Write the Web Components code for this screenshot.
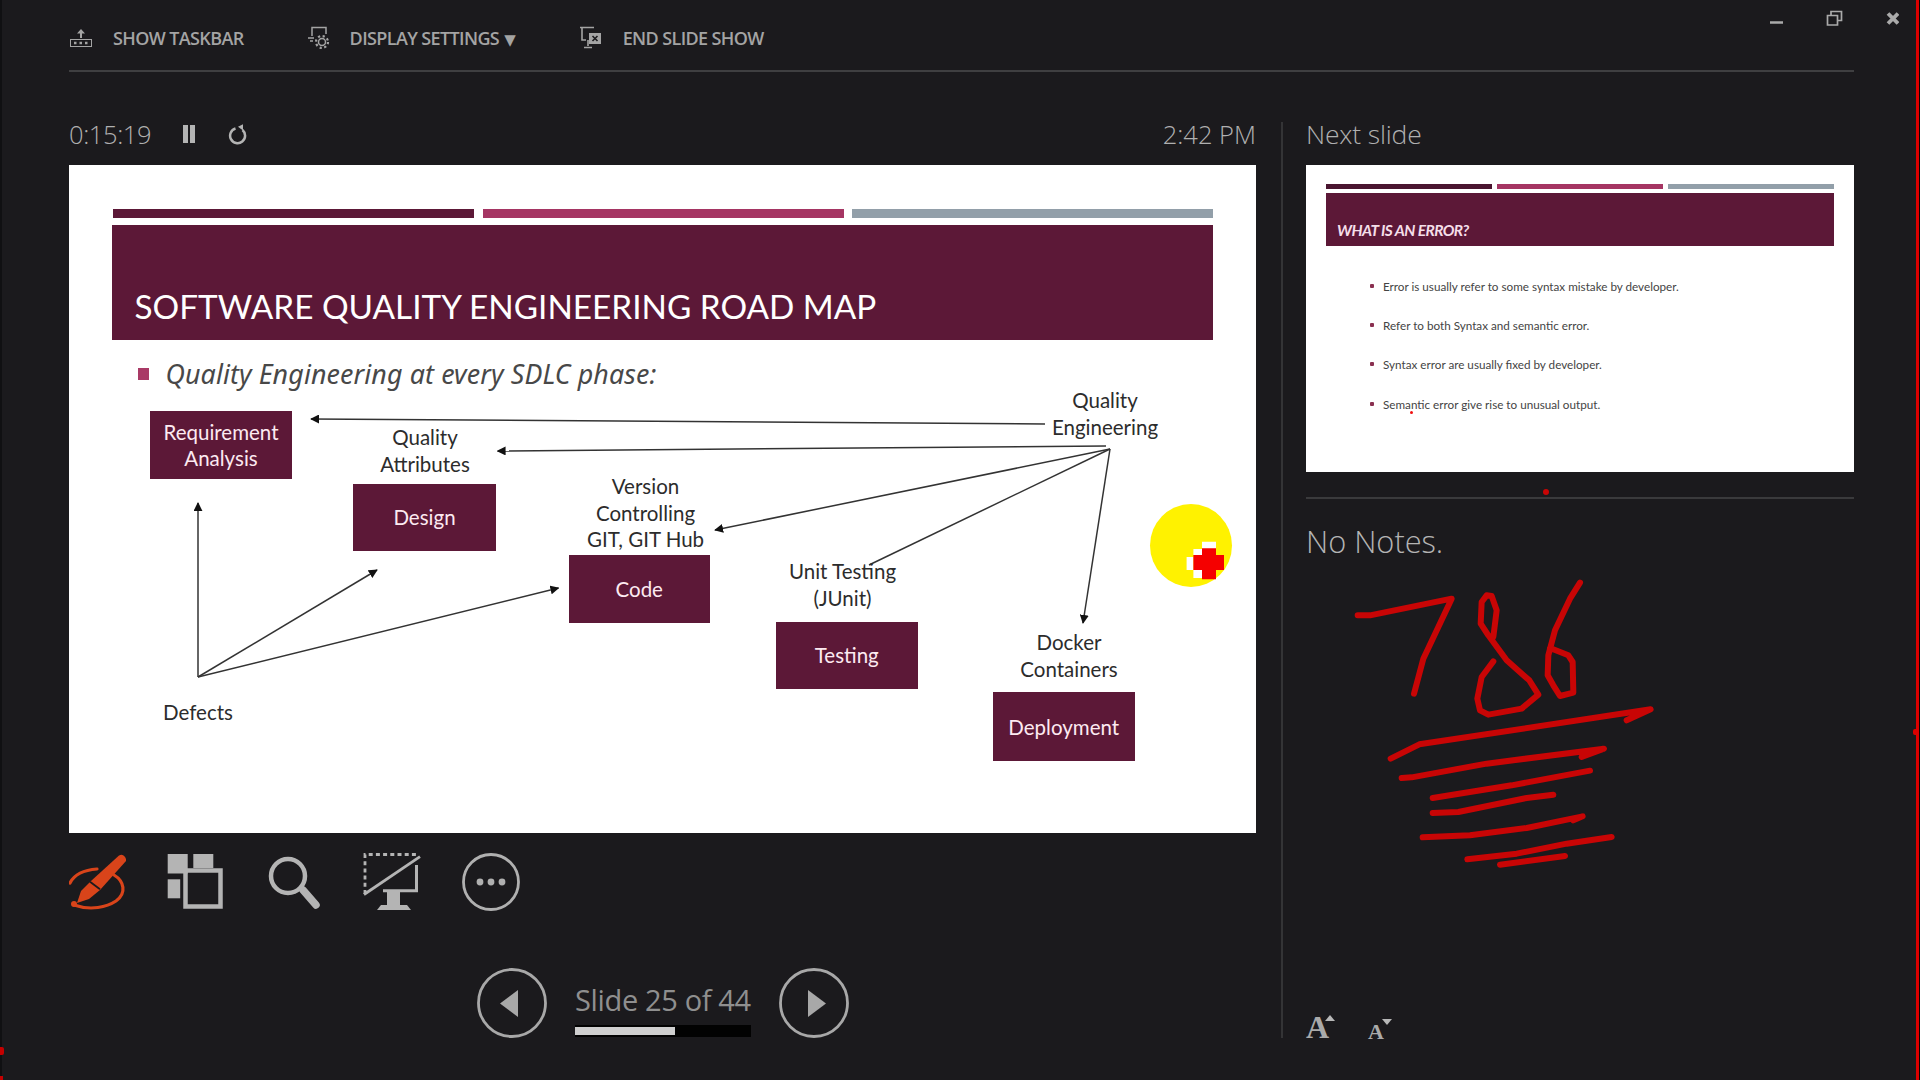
<!DOCTYPE html>
<html><head><meta charset="utf-8"><style>
html,body{margin:0;padding:0;background:#1b1a1d;}
</style></head><body>
<pp-presenter></pp-presenter>
<template id="t-presenter"><style>
:host{display:block;width:1920px;height:1080px;overflow:hidden;position:relative;background:#1b1a1d;color:#a9a9a9;font-family:"Open Sans","Liberation Sans",sans-serif;}
.edgeL{position:absolute;left:0;top:0;bottom:0;width:2px;background:#101012}
.edgeR{position:absolute;right:0;top:0;bottom:0;width:4px;background:linear-gradient(90deg,#dc0000 0 3px,#050505 3px)}
.blobR{position:absolute;left:1913px;top:729px;width:6px;height:6px;border-radius:2px;background:#dc0000}
.blobA{position:absolute;left:0;top:1047px;width:4px;height:8px;border-radius:0 2px 2px 0;background:#c40000}
.blobB{position:absolute;left:0;top:1076px;width:3px;height:4px;background:#c40000}
.body{display:flex;height:1008px;padding:0 66px 0 69px}
.rule{height:2px;background:#3f3f41;margin:0 66px 0 69px}
.left{width:1187px;display:flex;flex-direction:column}
.vr{width:2px;background:#343436;margin:50px 23px 42px 25px;flex:none}
.right{flex:1;min-width:0;display:flex;flex-direction:column}
</style>
<pp-titlebar></pp-titlebar><div class="rule"></div>
<div class="body">
 <div class="left"><pp-timerbar></pp-timerbar><pp-main-slide></pp-main-slide><pp-tools></pp-tools><pp-nav></pp-nav></div>
 <div class="vr"></div>
 <div class="right"><pp-next></pp-next><pp-notes></pp-notes></div>
</div>
<div class="edgeL"></div><div class="edgeR"></div><div class="blobR"></div><div class="blobA"></div><div class="blobB"></div>
</template>

<template id="t-titlebar"><style>
:host{display:flex;height:70px;padding:0 21px 0 69px;box-sizing:border-box;position:relative}
.i{display:flex;align-items:center;height:76px;font:600 18px "Open Sans",sans-serif;letter-spacing:-.62px;color:#a4a4a4;white-space:nowrap}
.i svg{display:block;margin-right:20px;flex:none}
.i+.i{margin-left:63px}
.tri{font:15px "DejaVu Sans",sans-serif;margin-left:5px;letter-spacing:0}
.win{margin-left:auto;display:flex;align-items:flex-start;color:#aaa}
.win svg{display:block}
</style>
<div class="i"><svg width="24" height="24" viewBox="0 0 24 24" fill="none" stroke="#a4a4a4"><path d="M12 3l4 4.5h-3V12h-2V7.5H8z" fill="#a4a4a4" stroke="none"/><rect x="1.5" y="13.5" width="21" height="7"/><path d="M5 17h2.500M10.500 17H13M16 17h2.500" stroke-width="2.400"/></svg>SHOW TASKBAR</div>
<div class="i"><svg width="24" height="26" viewBox="0 0 24 26" fill="none" stroke="#a4a4a4" stroke-width="1.5" style="margin-right:19px"><path d="M5 11V2.500h14V9M1 13h6M3 16h3"/><circle cx="15" cy="17" r="3.500"/><circle cx="15" cy="17" r="6" stroke-dasharray="2.200 2.500" stroke-width="2.200"/></svg><span>DISPLAY SETTINGS<span class="tri">▼</span></span></div>
<div class="i"><svg width="24" height="26" viewBox="0 0 24 26" fill="none" stroke="#a4a4a4" stroke-width="1.600"><path d="M1 2.500h14M3 3v12h4M9 15v6M5 22.500h8"/><rect x="10" y="8" width="12" height="11" fill="#a4a4a4" stroke="none"/><path d="M13.500 11l5 5M18.500 11l-5 5" stroke="#1b1a1d"/></svg>END SLIDE SHOW</div>
<div class="win">
<svg width="130" height="34" viewBox="0 0 130 34" fill="none" stroke="#aaa"><path d="M1 22.500h13" stroke-width="2.500"/><path d="M58.500 15.500h10v9.500h-10zM62 15v-3.500h10.500v9H69" stroke-width="1.700"/><path d="M119 13.500l10 10M129 13.500l-10 10" stroke-width="3.800"/></svg>
</div>
</template>

<template id="t-timerbar"><style>
:host{display:flex;align-items:center;height:93px;padding-top:30px;box-sizing:border-box;font:300 25.500px "Open Sans",sans-serif;color:#b0b0b0;flex:none}
svg{display:block}
.t{letter-spacing:-.4px;width:114px}
.r{margin-left:auto;font-weight:300;letter-spacing:0}
</style>
<span class="t">0:15:19</span>
<svg width="13" height="20" viewBox="0 0 13 20" fill="#b4b4b4"><rect x="0" y="1" width="5" height="18"/><rect x="7" y="1" width="5" height="18"/></svg>
<svg style="margin-left:32px" width="20" height="22" viewBox="0 0 20 22" fill="none" stroke="#b4b4b4" stroke-width="2.500"><path d="M7.500 5.500a7.500 7.500 0 1 0 7 1.500"/><path d="M6 1.500l5 3.800-5 2.500z" fill="#b4b4b4" stroke="none" transform="translate(5 -1) rotate(180 8 5)"/></svg>
<span class="r">2:42 PM</span>
</template>

<template id="t-main"><style>
:host{display:block;position:relative;width:1187px;height:668px;background:#fff;font-family:Lato,"Liberation Sans",sans-serif;color:#2d2d2d;overflow:hidden;flex:none}
.bars{display:flex;gap:8.500px;margin:44px 43px 0 44px;height:9px}
.bars i{flex:1;display:block}
.hd{margin:7px 43px 0 42.500px;height:115px;background:#5c1837;box-sizing:border-box;display:flex;align-items:flex-end;padding:0 0 14px 23px;color:#fff;font-size:33.300px;white-space:nowrap;letter-spacing:0}
.sub{display:flex;align-items:center;margin:16px 0 0 68.500px;font-style:italic;font-size:26.800px;color:#484848;font-family:"Noto Sans","Open Sans",sans-serif;letter-spacing:.12px;line-height:36px}
.sub b{width:11px;height:12px;background:#a93a66;margin-right:17px;display:block}
svg.lines{position:absolute;left:0;top:0}
.box{position:absolute;background:#5c1837;color:#fdeaf1;display:flex;align-items:center;justify-content:center;text-align:center;font-size:20.500px;line-height:26.500px;box-sizing:border-box}
.lb{position:absolute;text-align:center;font-size:20.500px;line-height:26.500px;white-space:nowrap;transform:translateX(-50%);color:#2c2c2c}
</style>
<div class="bars"><i style="background:#5c1837"></i><i style="background:#a53563"></i><i style="background:#929fa9"></i></div>
<div class="hd">SOFTWARE QUALITY ENGINEERING ROAD MAP</div>
<div class="sub"><b></b>Quality Engineering at every SDLC phase:</div>
<svg class="lines" width="1187" height="668" viewBox="69 165 1187 668" fill="none" stroke="#333" stroke-width="1.500">
<defs><marker id="a" viewBox="0 0 10 10" refX="9" refY="5" markerWidth="9" markerHeight="9" markerUnits="userSpaceOnUse" orient="auto"><path d="M0 0L10 5L0 10z" fill="#111" stroke="none"/></marker></defs>
<path d="M1045 424L311 419" marker-end="url(#a)"/>
<path d="M1106 446L497.500 451" marker-end="url(#a)"/>
<path d="M1110 449L715 530" marker-end="url(#a)"/>
<path d="M1110 449L869 565"/>
<path d="M1110 449L1083 623" marker-end="url(#a)"/>
<path d="M198 677V503" marker-end="url(#a)"/>
<path d="M198 677L377 570" marker-end="url(#a)"/>
<path d="M198 677L558.500 588" marker-end="url(#a)"/>
</svg>
<div class="box" style="left:81px;top:246px;width:142px;height:68px">Requirement<br>Analysis</div>
<div class="box" style="left:284px;top:319px;width:143px;height:67px">Design</div>
<div class="box" style="left:499.500px;top:390px;width:141.500px;height:68px">Code</div>
<div class="box" style="left:707px;top:456.500px;width:141.500px;height:67.500px">Testing</div>
<div class="box" style="left:924px;top:527px;width:141.500px;height:69px;padding-top:2px">Deployment</div>
<div class="lb" style="left:1036px;top:222px">Quality<br>Engineering</div>
<div class="lb" style="left:356px;top:259px">Quality<br>Attributes</div>
<div class="lb" style="left:576.500px;top:308px">Version<br>Controlling<br>GIT, GIT Hub</div>
<div class="lb" style="left:773.500px;top:393px">Unit Testing<br>(JUnit)</div>
<div class="lb" style="left:1000px;top:464px">Docker<br>Containers</div>
<div class="lb" style="left:129px;top:534px">Defects</div>
<svg class="lines" width="1187" height="668" viewBox="69 165 1187 668">
<ellipse cx="1191" cy="545.500" rx="41" ry="41.500" fill="#fff200"/>
<path d="M1202 541.700H1216V549H1202V555H1193.400V570H1202V578H1193.400V570H1186.600V557H1193.400V549H1202Z" fill="#fff"/>
<path d="M1202 548.300h14v6.700h8v15h-8v9.300h-14v-9.300h-8.600v-15h8.600z" fill="#f50000"/>
</svg>
</template>

<template id="t-tools"><style>
:host{display:flex;height:91px;align-items:flex-start;padding-top:20px;box-sizing:border-box;flex:none}
svg{display:block;flex:none}
</style>
<svg width="58" height="58" viewBox="0 0 58 58" fill="none">
<path d="M1 30C5 22 15 17 28 16" stroke="#d9441a" stroke-width="3.200" stroke-linecap="round"/>
<path d="M45 22C55 28 58 40 47 48C38 54 22 58 5 52" stroke="#d9441a" stroke-width="3.200" stroke-linecap="round"/>
<path d="M50 2.500c2-1 3-1 4.500 0s3 3 2.500 5.500L31 37 20 46 8 50 12 38 22 28z" fill="#d9441a"/>
<path d="M21 28.700l10 7.600" stroke="#1b1a1d" stroke-width="1.800"/>
<circle cx="5" cy="51" r="3" fill="#d9441a"/>
</svg>
<svg style="margin-left:39px" width="58" height="58" viewBox="0 0 58 58" fill="#b4b4b4">
<rect x="1.700" y="1" width="20" height="19.500"/><rect x="27.300" y="1" width="20" height="14"/><rect x="1.700" y="26.300" width="12.500" height="19"/>
<rect x="19.500" y="17.500" width="35" height="36" fill="none" stroke="#b4b4b4" stroke-width="4.500"/>
</svg>
<svg style="margin-left:43px" width="56" height="58" viewBox="0 0 56 58" fill="none" stroke="#b4b4b4">
<circle cx="21" cy="23" r="17" stroke-width="4.500"/><path d="M36 37l13 15" stroke-width="7.500" stroke-linecap="round"/>
</svg>
<svg style="margin-left:40px" width="60" height="58" viewBox="0 0 60 58" fill="none" stroke="#b4b4b4">
<path d="M2 41V1.500H55" stroke-width="2.800" stroke-dasharray="4 3.200"/><path d="M1 41.500L57 3.700" stroke-width="2.800"/>
<path d="M53.500 12V37.700H20" stroke-width="3"/><path d="M24 39h13v14H24z" fill="#b4b4b4" stroke="none"/><path d="M14 57h34l-4-5H18z" fill="#b4b4b4" stroke="none"/>
</svg>
<svg style="margin-left:39px" width="59" height="58" viewBox="0 0 59 58" fill="none" stroke="#b0b0b0">
<circle cx="29" cy="29" r="27.500" stroke-width="2.800"/><circle cx="18" cy="29" r="3.400" fill="#b0b0b0" stroke="none"/><circle cx="29" cy="29" r="3.400" fill="#b0b0b0" stroke="none"/><circle cx="40" cy="29" r="3.400" fill="#b0b0b0" stroke="none"/>
</svg>
</template>

<template id="t-nav"><style>
:host{display:flex;align-items:flex-start;padding:44px 0 0 408px;flex:none}
svg{display:block;flex:none}
.m{width:176px;margin:0 28px;display:flex;flex-direction:column}
.txt{font:400 29px "Open Sans",sans-serif;color:#8f8f8f;white-space:nowrap;letter-spacing:-.35px;line-height:40px;height:40px;margin-top:12px}
.bar{height:12px;background:#020202;margin-top:5px;padding:2px 0;box-sizing:border-box}
.bar i{display:block;width:100px;height:8px;background:#cfcfcf}
</style>
<svg width="70" height="70" viewBox="0 0 70 70" fill="none"><circle cx="35" cy="35" r="33.500" stroke="#a8a8a8" stroke-width="2.800"/><path d="M41 22v27L23 35.500z" fill="#a8a8a8"/></svg>
<div class="m"><div class="txt">Slide 25 of 44</div><div class="bar"><i></i></div></div>
<svg width="70" height="70" viewBox="0 0 70 70" fill="none"><circle cx="35" cy="35" r="33.500" stroke="#a8a8a8" stroke-width="2.800"/><path d="M29 22v27l18-13.500z" fill="#a8a8a8"/></svg>
</template>

<template id="t-next"><style>
:host{display:block;flex:none}
.h{height:93px;padding-top:30px;display:flex;align-items:center;font:300 26.500px "Open Sans",sans-serif;color:#b0b0b0;box-sizing:border-box;letter-spacing:-.17px}
.th{height:307px;background:#fff;position:relative;overflow:hidden;font-family:Lato,sans-serif;color:#444}
.bars{display:flex;gap:5px;margin:19px 20px 0;height:5px}
.bars i{flex:1}
.hd{margin:4px 20px 0;height:53px;background:#5c1837;color:#f5dfe9;font-style:italic;font-size:15.500px;font-weight:700;display:flex;align-items:flex-end;padding:0 0 7px 11px;box-sizing:border-box;letter-spacing:-.55px;white-space:nowrap}
ul{list-style:none;margin:20px 0 0 64px;padding:0;font-size:11.700px;line-height:20px}
li{display:flex;align-items:center;height:39.300px;white-space:nowrap}
li b{width:4px;height:4px;border-radius:1px;background:#8a3050;margin-right:9px;display:block;flex:none}
.dot{position:absolute;left:104px;top:246px;width:3px;height:3px;border-radius:50%;background:#f01010}
.foot{height:26px;display:flex;align-items:flex-start;position:relative}
.foot i{position:absolute;left:237px;top:17px;width:6px;height:6px;border-radius:50%;background:#c80505}
.hr{height:2px;background:#3a3a3c;margin-top:25px}
</style>
<div class="h">Next slide</div>
<div class="th"><div class="bars"><i style="background:#4a1530"></i><i style="background:#a53563"></i><i style="background:#929fa9"></i></div>
<div class="hd">WHAT IS AN ERROR?</div>
<ul><li><b></b>Error is usually refer to some syntax mistake by developer.</li><li><b></b>Refer to both Syntax and semantic error.</li><li><b></b>Syntax error are usually fixed by developer.</li><li><b></b>Semantic error give rise to unusual output.</li></ul>
<div class="dot"></div></div>
<div class="foot"><i></i><div class="hr" style="width:100%"></div></div>
</template>

<template id="t-notes"><style>
:host{display:block;flex:1;position:relative;min-height:0}
.n{font:300 30.800px "Open Sans",sans-serif;color:#b4b4b4;line-height:40px;margin-top:23px;letter-spacing:-.03px}
svg.ink{position:absolute;left:-26px;top:4px}
.az{position:absolute;left:0;top:513px;display:flex;align-items:flex-end;font-family:"Liberation Serif",serif;font-weight:700;color:#aaa;line-height:1}
.az span{position:relative;display:block}
.az .b{font-size:32px;width:62px}
.az .s{font-size:22px}
.az svg{position:absolute;display:block}
</style>
<div class="n">No Notes.</div>
<svg class="ink" width="420" height="400" viewBox="0 0 1260 1200" fill="none" stroke="#c80505" stroke-width="18" stroke-linecap="round" stroke-linejoin="round">
<path d="M233 340L270 340L515 290L430 470L402 575"/>
<path d="M640 478L605 525L592 590L600 625L625 638L725 620L775 578L748 535L680 475L625 400L602 365L605 300L620 280L635 282L650 325L640 405"/>
<path d="M900 242L870 290L825 385L805 460L803 520L820 550L840 582L880 572L878 480L865 460L810 438"/>
<path d="M332 770L418 727L1112 622L1040 655"/>
<path d="M365 828L395 826L620 785L972 740L905 765"/>
<path d="M458 888L695 850L930 806"/>
<path d="M458 933L535 930L740 888L820 878"/>
<path d="M428 1006L570 1000L740 978L908 943L880 955"/>
<path d="M562 1072L710 1055L860 1025L995 1005"/>
<path d="M660 1088L855 1062"/>
</svg>
<div class="az"><span class="b">A<svg style="left:19px;top:4px" width="10" height="6"><path d="M0 6L5 0L10 6z" fill="#b8b8b8"/></svg></span><span class="s">A<svg style="left:14px;top:-2px" width="10" height="6"><path d="M0 0L10 0L5 6z" fill="#b8b8b8"/></svg></span></div>
</template>

<script>
const def=(n,t)=>customElements.define(n,class extends HTMLElement{constructor(){super();this.attachShadow({mode:'open'}).appendChild(document.getElementById(t).content.cloneNode(true));}});
def('pp-titlebar','t-titlebar');def('pp-timerbar','t-timerbar');def('pp-main-slide','t-main');def('pp-tools','t-tools');def('pp-nav','t-nav');def('pp-next','t-next');def('pp-notes','t-notes');def('pp-presenter','t-presenter');
</script>
</body></html>
